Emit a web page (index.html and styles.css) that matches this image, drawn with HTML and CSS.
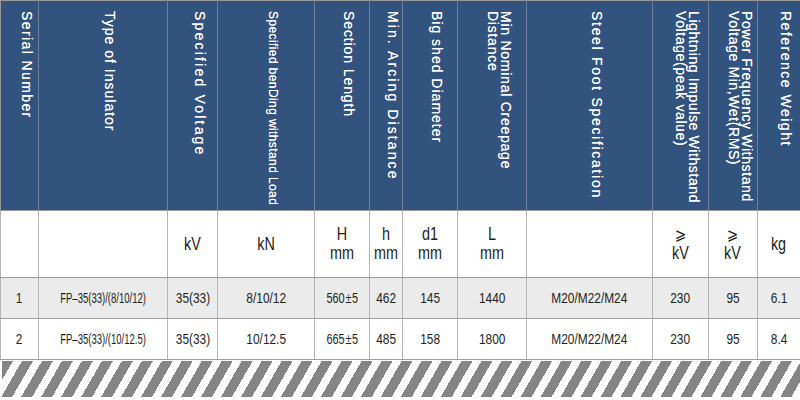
FILE: index.html
```html
<!DOCTYPE html>
<html>
<head>
<meta charset="utf-8">
<link rel="stylesheet" href="styles.css">
</head>
<body>
<div class="sheet">
<table class="spec">
  <colgroup>
    <col class="w38"><col class="w129"><col class="w50"><col class="w97"><col class="w55"><col class="w33"><col class="w55"><col class="w69"><col class="w126"><col class="w56"><col class="w49"><col class="w43">
  </colgroup>
  <thead>
    <tr class="head">
      <th><div class="vt ls14">Serial Number</div></th>
      <th><div class="vt ls10">Type of Insulator</div></th>
      <th><div class="vt ls22">Specified Voltage</div></th>
      <th><div class="vt small">Specified benDing withstand Load</div></th>
      <th><div class="vt ls09">Section Length</div></th>
      <th><div class="vt ls21">Min. Arcing Distance</div></th>
      <th><div class="vt ls10">Big shed Diameter</div></th>
      <th><div class="vt ls07">Min Nominal Creepage<br>Distance</div></th>
      <th><div class="vt ls17">Steel Foot Specification</div></th>
      <th><div class="vt ls06">Lightning Impulse Withstand<br>Voltage(peak value)</div></th>
      <th><div class="vt ls06">Power Frequency Withstand<br>Voltage Min,Wet(RMS)</div></th>
      <th><div class="vt ls15">Reference Weight</div></th>
    </tr>
  </thead>
  <tbody>
    <tr class="units">
      <td></td>
      <td></td>
      <td><span class="u">kV</span></td>
      <td><span class="u">kN</span></td>
      <td><span class="u">H<br>mm</span></td>
      <td><span class="u">h<br>mm</span></td>
      <td><span class="u">d1<br>mm</span></td>
      <td><span class="u">L<br>mm</span></td>
      <td></td>
      <td><span class="u"><span class="ge">⩾</span><br>kV</span></td>
      <td><span class="u"><span class="ge">⩾</span><br>kV</span></td>
      <td><span class="u">kg</span></td>
    </tr>
    <tr class="row alt">
      <td><span class="c">1</span></td>
      <td><span class="c tight">FP–35(33)/(8/10/12)</span></td>
      <td><span class="c">35(33)</span></td>
      <td><span class="c">8/10/12</span></td>
      <td><span class="c pm">560 ± 5</span></td>
      <td><span class="c">462</span></td>
      <td><span class="c">145</span></td>
      <td><span class="c">1440</span></td>
      <td><span class="c">M20/M22/M24</span></td>
      <td><span class="c">230</span></td>
      <td><span class="c">95</span></td>
      <td><span class="c">6.1</span></td>
    </tr>
    <tr class="row">
      <td><span class="c">2</span></td>
      <td><span class="c tight">FP–35(33)/(10/12.5)</span></td>
      <td><span class="c">35(33)</span></td>
      <td><span class="c">10/12.5</span></td>
      <td><span class="c pm">665 ± 5</span></td>
      <td><span class="c">485</span></td>
      <td><span class="c">158</span></td>
      <td><span class="c">1800</span></td>
      <td><span class="c">M20/M22/M24</span></td>
      <td><span class="c">230</span></td>
      <td><span class="c">95</span></td>
      <td><span class="c">8.4</span></td>
    </tr>
  </tbody>
</table>
<div class="stripes"></div>
</div>
</body>
</html>
```

FILE: styles.css
```css
html, body {
  margin: 0;
  padding: 0;
  background: #ffffff;
}
body {
  font-family: "Liberation Sans", Arial, Helvetica, sans-serif;
  color: #222;
}
.sheet {
  width: 800px;
  height: 400px;
  overflow: hidden;
}
.spec {
  width: 800px;
  border-collapse: collapse;
  table-layout: fixed;
}
.w38 { width: 38px; }
.w129 { width: 129px; }
.w50 { width: 50px; }
.w97 { width: 97px; }
.w55 { width: 55px; }
.w33 { width: 33px; }
.w69 { width: 69px; }
.w126 { width: 126px; }
.w56 { width: 56px; }
.w49 { width: 49px; }
.w43 { width: 43px; }

.head {
  height: 210px;
  background: #33537f;
}
.head th {
  vertical-align: top;
  text-align: center;
  padding: 10px 0 0 13px;
  border-left: 1px solid #6d7f99;
  border-right: 1px solid #6d7f99;
  border-top: 1px solid #9a9a9a;
  border-bottom: 1px solid #9a9a9a;
  color: #ffffff;
  font-weight: normal;
}
.head th:first-child {
  border-left: 1px solid #9a9a9a;
}
.vt {
  display: inline-block;
  writing-mode: vertical-rl;
  text-align: left;
  font-size: 14px;
  line-height: 13px;
  white-space: nowrap;
  text-shadow: 0 0 0.5px rgba(255, 255, 255, 0.9);
}
.vt.small {
  font-size: 12px;
  letter-spacing: 0.4px;
}
.ls06 { letter-spacing: 0.6px; }
.ls07 { letter-spacing: 0.75px; }
.ls09 { letter-spacing: 0.9px; }
.ls10 { letter-spacing: 1px; }
.ls14 { letter-spacing: 1.4px; }
.ls15 { letter-spacing: 1.5px; }
.ls17 { letter-spacing: 1.7px; }
.ls21 { letter-spacing: 2.1px; }
.ls22 { letter-spacing: 2.2px; }

.units {
  height: 67px;
}
.units td {
  text-align: center;
  vertical-align: middle;
  border: 1px solid #b4b4b4;
  border-top: 1px solid #9a9a9a;
  border-bottom: 1px solid #9a9a9a;
  padding: 0;
}
.u {
  display: inline-block;
  font-size: 18px;
  line-height: 19px;
  transform: scaleX(0.8);
  color: #1e1e1e;
}
.ge {
  font-family: "DejaVu Sans", sans-serif;
  font-size: 17px;
}

.row {
  height: 41px;
}
.row td {
  text-align: center;
  vertical-align: middle;
  border: 1px solid #b4b4b4;
  border-top: 1px solid #9f9f9f;
  border-bottom: 1px solid #9f9f9f;
  padding: 0;
  white-space: nowrap;
}
.alt {
  background: #ebebeb;
}
.c {
  display: inline-block;
  font-size: 14.5px;
  transform: scaleX(0.82);
  color: #1e1e1e;
}
.c.tight {
  font-size: 14px;
  transform: scaleX(0.68);
}
.c.pm {
  font-size: 14px;
  word-spacing: -3px;
  transform: scaleX(0.78);
}

.stripes {
  margin-top: 1px;
  margin-left: 2px;
  height: 36px;
  background: repeating-linear-gradient(120deg, #858585 0 9.5px, #ffffff 9.5px 17.3px);
}
```
